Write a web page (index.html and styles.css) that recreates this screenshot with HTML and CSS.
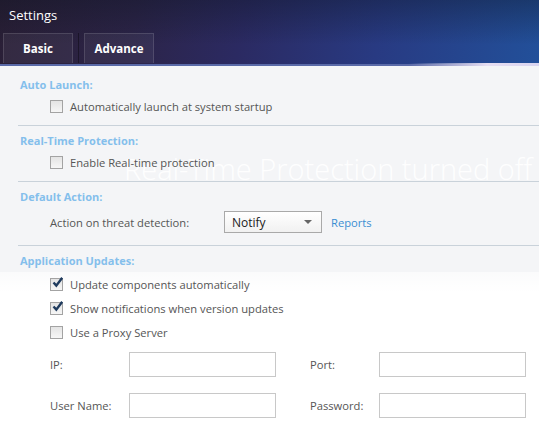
FILE: index.html
```html
<!DOCTYPE html>
<html>
<head>
<meta charset="utf-8">
<link rel="stylesheet" href="styles.css">
</head>
<body>
<div class="window">
  <header class="header">
    <div class="title">Settings</div>
    <nav class="tabs">
      <div class="tab">Basic</div>
      <div class="tab-sep"></div>
      <div class="tab">Advance</div>
    </nav>
  </header>
  <main class="content">
    <div class="watermark">Real-Time Protection turned off</div>
    <svg class="deco" width="539" height="200" viewBox="0 0 539 200">
      <circle cx="45" cy="110" r="78" fill="none" stroke="#e6f5fa" stroke-width="3"/>
      <circle cx="45" cy="110" r="62" fill="none" stroke="#ecf7fb" stroke-width="2"/>
      <circle cx="290" cy="110" r="62" fill="none" stroke="#ecf7fb" stroke-width="3"/>
      <circle cx="540" cy="110" r="78" fill="none" stroke="#e6f5fa" stroke-width="3"/>
    </svg>
    <section class="section s1">
      <h2 class="heading">Auto Launch:</h2>
      <label class="row"><span class="cb"></span>Automatically launch at system startup</label>
    </section>
    <section class="section s2">
      <h2 class="heading">Real-Time Protection:</h2>
      <label class="row"><span class="cb"></span>Enable Real-time protection</label>
    </section>
    <section class="section s3">
      <h2 class="heading">Default Action:</h2>
      <div class="row action">
        <span class="action-label">Action on threat detection:</span>
        <div class="select"><span>Notify</span><span class="arrow"></span></div>
        <a class="link">Reports</a>
      </div>
    </section>
    <section class="section s4">
      <h2 class="heading">Application Updates:</h2>
      <div class="upd">
        <label class="row r24"><span class="cb on"><svg width="11" height="11" viewBox="0 0 11 11"><path d="M1.5 5.5 L4.3 8.6 L10.2 0.8" fill="none" stroke="#1f3b5e" stroke-width="2.4"/></svg></span>Update components automatically</label>
        <label class="row r24"><span class="cb on"><svg width="11" height="11" viewBox="0 0 11 11"><path d="M1.5 5.5 L4.3 8.6 L10.2 0.8" fill="none" stroke="#1f3b5e" stroke-width="2.4"/></svg></span>Show notifications when version updates</label>
        <label class="row r24"><span class="cb"></span>Use a Proxy Server</label>
        <div class="proxy">
          <span class="plabel">IP:</span><div class="input"></div>
          <span class="plabel">Port:</span><div class="input"></div>
          <span class="plabel">User Name:</span><div class="input"></div>
          <span class="plabel">Password:</span><div class="input"></div>
        </div>
      </div>
    </section>
  </main>
</div>
</body>
</html>
```
FILE: styles.css
```css
* { box-sizing: border-box; }
html, body { margin: 0; padding: 0; }
body {
  width: 539px;
  height: 438px;
  overflow: hidden;
  font-family: "Open Sans", "Noto Sans", sans-serif;
  font-size: 11.2px;
  background: #f4f5f7;
}
.window { width: 539px; height: 438px; display: flex; flex-direction: column; }
.header {
  height: 66px;
  flex: none;
  background:
    linear-gradient(180deg, rgba(10,18,30,0.35) 0%, rgba(0,0,0,0) 70%),
    linear-gradient(100deg, #2a1f36 0%, #2c2448 25%, #2b2a62 45%, #283a82 70%, #22509a 100%);
  border-bottom: 2px solid #5a6aa8;
  position: relative;
}
.header::after {
  content: "";
  position: absolute;
  right: 0; bottom: -2px;
  width: 130px; height: 3px;
  background: linear-gradient(90deg, rgba(230,220,245,0), #e6def2 60%, #d8d4f0);
}
.title {
  color: #fff;
  font-size: 13px;
  padding: 6px 0 0 9px;
  height: 33px;
  line-height: 18px;
}
.tabs { display: flex; align-items: stretch; padding-left: 3px; height: 30px; }
.tab {
  width: 70px;
  height: 30px;
  display: flex;
  align-items: center;
  justify-content: center;
  color: #fff;
  font-weight: 700;
  font-size: 11.5px;
  background: rgba(255,255,255,0.05);
  border: 1px solid rgba(255,255,255,0.13);
  border-bottom: none;
}
.tab-sep { width: 1px; margin: 0 5px 0 5px; background: rgba(0,0,0,0.35); }
.content { flex: 1; position: relative; overflow: hidden; background: #f4f5f7; }
.watermark {
  position: absolute;
  left: 124px; top: 83px;
  font-size: 29px;
  color: rgba(255,255,255,0.95);
  white-space: nowrap;
  font-weight: 300;
  pointer-events: none;
  z-index: 1;
}
.deco { position: absolute; left: 0; top: 215px; z-index: 0; }
.section { position: relative; z-index: 2; border-bottom: 1px solid #c9d2da; margin-left: 18px; }
.section .heading, .section .row { margin-left: -18px; }
.heading {
  margin: 0;
  padding-left: 20px;
  height: 20px;
  line-height: 20px;
  font-size: 11px;
  font-weight: 700;
  color: #84bfec;
}
.s1 { padding: 9px 0 8px; }
.s2 { padding: 5px 0 8px; }
.s3 { padding: 5px 0 8px; }
.s4 { padding: 5px 0 0; border-bottom: none; margin-left: 0; }
.s4 .heading, .s4 .row { margin-left: 0; }
.row {
  display: flex;
  align-items: center;
  height: 22px;
  padding-left: 50px;
  color: #555;
  position: relative;
}
.r24 { height: 24px; }
.r24:first-child { margin-top: 1px; }
.cb {
  width: 13px; height: 13px;
  border: 1px solid #a3a3a3;
  background: linear-gradient(180deg, #e4e4e4, #f6f6f6);
  margin-right: 7px;
  flex: none;
  position: relative;
}
.cb svg { position: absolute; left: 1px; top: -2px; }
.action { height: 30px; }
.action-label { width: 174px; }
.select {
  width: 98px; height: 22px;
  border: 1px solid #a9a9a9;
  background: linear-gradient(180deg, #ffffff, #f1f1f1);
  display: flex;
  align-items: center;
  justify-content: space-between;
  padding: 0 9px 0 7px;
  color: #1a1a1a;
  font-size: 12px;
}
.arrow {
  width: 0; height: 0;
  border-left: 4px solid transparent;
  border-right: 4px solid transparent;
  border-top: 4px solid #666;
}
.link { color: #3a8ed2; margin-left: 9px; }
.upd { background: linear-gradient(180deg, rgba(255,255,255,0.6), #ffffff 20px); padding-bottom: 40px; }
.proxy {
  display: grid;
  grid-template-columns: 79px 147px 34px 69px 147px;
  grid-auto-rows: 25px;
  row-gap: 16px;
  padding: 8px 0 0 50px;
  align-items: center;
}
.proxy .plabel { color: #555; }
.proxy .plabel:nth-of-type(2), .proxy .plabel:nth-of-type(4) { grid-column: 4; }
.input { height: 25px; border: 1px solid #c8c8c8; background: #fff; }
```
